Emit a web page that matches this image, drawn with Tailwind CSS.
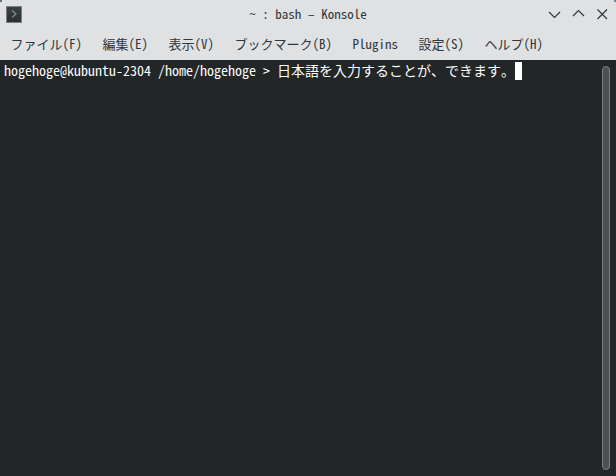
<!DOCTYPE html>
<html lang="ja">
<head>
    <meta charset="UTF-8">
    <title>~ : bash – Konsole</title>
    <script src="https://cdn.jsdelivr.net/npm/@tailwindcss/browser@4"></script>
</head>
<body class="bg-[#232627]">
    <div class="relative w-[616px] h-[476px] flex flex-col overflow-hidden font-['Noto_Sans_Mono_CJK_JP','Noto_Sans_CJK_JP',monospace]">
        <header class="h-[60px] bg-[#dfe1e3] text-[#31363b] text-[13px] shrink-0 flex flex-col">
            <div class="h-[28px] flex items-center pl-[6px] pr-[7px]">
                <div class="w-[16px] h-[17px] bg-gradient-to-b from-[#3a4143] to-[#2a3032] border border-[#7b8183] flex items-center justify-center">
                    <svg class="w-[10px] h-[10px]" viewBox="0 0 10 10" fill="none" stroke="#868c8e" stroke-width="1.2"><path d="M3 1.5 L7 5 L3 8.5"/></svg>
                </div>
                <div class="flex-1 text-center pl-[46px]">~ : bash – Konsole</div>
                <div class="flex items-center gap-[11px] mt-[1px]">
                    <svg class="w-[13px] h-[13px]" viewBox="0 0 13 13" fill="none" stroke="#31363b" stroke-width="1.2"><path d="M1 4 L6.5 9.5 L12 4"/></svg>
                    <svg class="w-[13px] h-[13px]" viewBox="0 0 13 13" fill="none" stroke="#31363b" stroke-width="1.2"><path d="M1 8 L6.5 2.5 L12 8"/></svg>
                    <svg class="w-[13px] h-[13px]" viewBox="0 0 13 13" fill="none" stroke="#31363b" stroke-width="1.2"><path d="M1.5 1.5 L11 11 M11 1.5 L1.5 11"/></svg>
                </div>
            </div>
            <nav class="h-[32px] flex items-center pl-[10.5px] gap-[20.5px]">
                <span>ファイル(F)</span>
                <span>編集(E)</span>
                <span>表示(V)</span>
                <span>ブックマーク(B)</span>
                <span>Plugins</span>
                <span>設定(S)</span>
                <span>ヘルプ(H)</span>
            </nav>
        </header>
        <main class="flex-1 relative text-[#fcfcfc] text-[14px] pl-[4px] pt-[2px]">
            <div class="flex items-center h-[18px] whitespace-pre">
                <span class="mt-[-1px]">hogehoge@kubuntu-2304 /home/hogehoge &gt; 日本語を入力することが、できます。</span><span class="w-[7px] h-[18px] bg-white"></span>
            </div>
            <div class="absolute right-[6px] top-[6px] bottom-[6px] w-[8px] rounded-full border border-[#7c8082] bg-[#4d5153]"></div>
        </main>
        <div class="absolute left-0 top-0 w-[2px] h-[2px] bg-[#6b7072]"></div>
        <div class="absolute right-0 top-0 w-[2px] h-[2px] bg-[#5f8a96]"></div>
    </div>
</body>
</html>
